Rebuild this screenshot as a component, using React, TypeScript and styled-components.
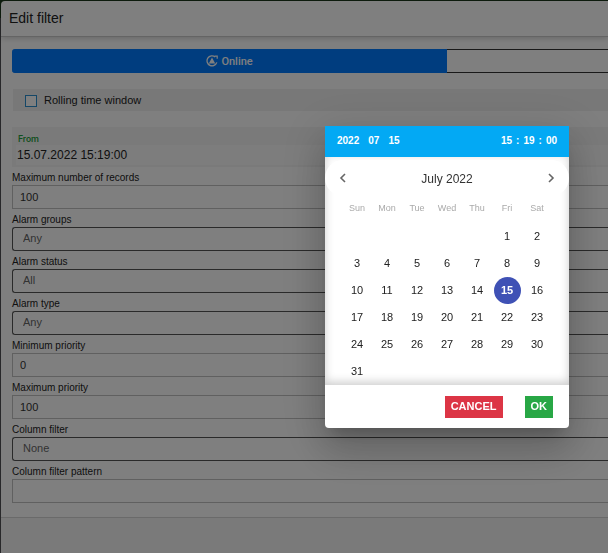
import { useState } from "react";
import styled, { createGlobalStyle, css } from "styled-components";

const GlobalStyle = createGlobalStyle`
  *, *::before, *::after { box-sizing: border-box; }
  html, body, #root { height: 100%; }
  body {
    margin: 0;
    background: #143014;
    font-family: "Liberation Sans", Arial, sans-serif;
    overflow: hidden;
  }
  button, input, select { font-family: inherit; }
`;

const Page = styled.div`
  min-height: 100%;
  padding: 1px 0 0 1px;
  display: flex;
  background: linear-gradient(#1c3a1c 0 18px, #505054 18px);
`;

const Dialog = styled.section`
  flex: 1;
  display: flex;
  flex-direction: column;
  background: #fff;
  border-radius: 4px 0 0 4px;
`;

const DialogHeader = styled.header`
  height: 36px;
  padding: 0 8px 2px;
  display: flex;
  align-items: center;
  border-bottom: 1px solid #c8c8c8;
  box-shadow: 0 1px 6px rgba(0, 0, 0, 0.2);
`;

const DialogTitle = styled.h1`
  margin: 0;
  font-size: 14px;
  font-weight: 400;
  line-height: 20px;
  color: #222;
`;

const DialogBody = styled.form`
  flex: 1;
  padding: 12px 0 0 11px;
`;

const Segments = styled.div`
  display: flex;
  height: 24px;
`;

const Segment = styled.button<{ $active?: boolean }>`
  flex: ${(p) => (p.$active ? "0 0 73%" : "1")};
  display: flex;
  align-items: center;
  justify-content: center;
  gap: 3px;
  padding: 0;
  font-size: 11px;
  border: 1px solid #333;
  border-width: 1px 0;
  background: #fff;
  color: #333;
  ${(p) =>
    p.$active &&
    css`
      border-color: #007bff;
      border-radius: 3px 0 0 3px;
      background: #007bff;
      color: #fff;
      font-family: Roboto, sans-serif;
      font-weight: 500;
    `}
`;

const RollingRow = styled.label`
  display: flex;
  align-items: center;
  gap: 7px;
  height: 22px;
  margin: 16px 0 0 1px;
  padding-left: 12px;
  background: #f1f1f1;
  font-size: 11px;
  color: #222;
`;

const CheckBox = styled.input`
  appearance: none;
  width: 12px;
  height: 12px;
  margin: 1px 0 0;
  border: 1px solid #2a8fce;
  background: #fff;
  &:checked {
    background: #2a8fce;
  }
`;

const DateField = styled.label`
  display: flex;
  flex-direction: column;
  height: 40px;
  margin-top: 16px;
  padding: 6px 0 0 4px;
  background: #f4f4f4;
`;

const DateCaption = styled.span`
  padding-left: 2px;
  font-family: Roboto, sans-serif;
  font-size: 9px;
  font-weight: 500;
  line-height: 12px;
  color: #1fa03c;
`;

const DateInput = styled.input`
  width: 100%;
  height: 20px;
  padding: 0 0 0 1px;
  border: 0;
  background: #fafafa;
  font-size: 12px;
  color: #222;
`;

const Field = styled.div`
  display: flex;
  flex-direction: column;
`;

const FieldLabel = styled.label`
  height: 18px;
  padding-top: 3px;
  font-size: 10px;
  line-height: 15px;
  color: #222;
`;

const box = css`
  width: 100%;
  height: 24px;
  background: #fff;
  font-size: 11px;
  color: #333;
`;

const TextInput = styled.input`
  ${box}
  padding: 0 7px;
  border: 1px solid #c0c0c0;
  border-right: 0;
`;

const Select = styled.select`
  ${box}
  appearance: none;
  padding: 0 10px 2px;
  border: 1px solid #555;
  border-right: 0;
  border-radius: 3px 0 0 3px;
  color: #666;
`;

const DialogFooter = styled.footer`
  height: 36px;
  border-top: 1px solid #d5d5d5;
  background: #f5f5f5;
`;

const Overlay = styled.div`
  position: fixed;
  inset: 0;
  display: flex;
  align-items: flex-start;
  justify-content: flex-end;
  padding: 126px 39px 0 0;
  background: rgba(0, 0, 0, 0.5);
`;

const Picker = styled.div`
  width: 244px;
  border-radius: 0 0 4px 4px;
  background: #fff;
  box-shadow:
    0 11px 15px -7px rgba(0, 0, 0, 0.2),
    0 24px 38px 3px rgba(0, 0, 0, 0.14),
    0 9px 46px 8px rgba(0, 0, 0, 0.12);
`;

const PickerHeader = styled.header`
  display: flex;
  justify-content: space-between;
  align-items: center;
  height: 31px;
  padding: 0 12px 2px;
  background: #03a9f4;
  color: #fff;
  font-size: 10px;
  font-weight: 700;
  line-height: 14px;
`;

const Parts = styled.div<{ $gap: number }>`
  display: flex;
  gap: ${(p) => p.$gap}px;
`;

const PickerBody = styled.div`
  padding-top: 3px;
  box-shadow: inset 0 -3px 10px rgba(0, 0, 0, 0.2);
`;

const MonthNav = styled.nav`
  display: flex;
  justify-content: space-between;
  align-items: center;
  height: 36px;
  border-radius: 18px;
  background: #fff;
`;

const MonthLabel = styled.strong`
  padding-top: 1px;
  font-size: 12px;
  font-weight: 400;
  line-height: 16px;
  color: #333;
`;

const NavButton = styled.button`
  display: flex;
  align-items: center;
  justify-content: center;
  width: 36px;
  height: 36px;
  padding: 0;
  border: 0;
  background: none;
  color: #666;
`;

const Calendar = styled.table`
  width: 210px;
  margin: 0 17px;
  border-collapse: collapse;
  table-layout: fixed;
  text-align: center;
`;

const Weekday = styled.th`
  height: 27px;
  padding: 0 0 3px;
  font-size: 9px;
  font-weight: 400;
  line-height: 12px;
  color: #aaa;
`;

const DayCell = styled.td`
  height: 27px;
  padding: 0;
`;

const Day = styled.button<{ $selected: boolean }>`
  display: block;
  width: 27px;
  height: 27px;
  margin: 0 auto;
  padding: 0 0 2px;
  border: 0;
  border-radius: 50%;
  background: ${(p) => (p.$selected ? "#3f51b5" : "transparent")};
  color: ${(p) => (p.$selected ? "#fff" : "#222")};
  font-size: 11px;
  font-weight: ${(p) => (p.$selected ? 700 : 400)};
`;

const Actions = styled.footer`
  display: flex;
  justify-content: flex-end;
  gap: 22px;
  height: 43px;
  padding: 11px 16px 0 0;
`;

const Action = styled.button<{ $color: string }>`
  height: 22px;
  padding: 0 6px 2px;
  border: 0;
  background: ${(p) => p.$color};
  color: #fff;
  font-size: 11px;
  font-weight: 700;
`;

const OnlineIcon = () => (
  <svg width="12" height="12" viewBox="0 0 12 12" fill="none" stroke="currentColor" aria-hidden="true">
    <path d="M9.2 2A5 5 0 1 0 10.8 7.4" strokeWidth="1.3" />
    <path d="M8.6 1.2h2.6v2.6" strokeWidth="1.2" />
    <path d="M6 2.6 9.2 8.6H2.8Z" fill="currentColor" stroke="none" />
  </svg>
);

const Chevron = ({ right }: { right?: boolean }) => (
  <svg width="8" height="10" viewBox="0 0 8 10" fill="none" stroke="currentColor" strokeWidth="1.6" aria-hidden="true">
    <path d={right ? "M2 1 6 5 2 9" : "M6 1 2 5 6 9"} />
  </svg>
);

type FieldSpec = { id: string; label: string; value: string; kind: "text" | "select" };

const fields: FieldSpec[] = [
  { id: "records", label: "Maximum number of records", value: "100", kind: "text" },
  { id: "groups", label: "Alarm groups", value: "Any", kind: "select" },
  { id: "status", label: "Alarm status", value: "All", kind: "select" },
  { id: "type", label: "Alarm type", value: "Any", kind: "select" },
  { id: "min", label: "Minimum priority", value: "0", kind: "text" },
  { id: "max", label: "Maximum priority", value: "100", kind: "text" },
  { id: "column", label: "Column filter", value: "None", kind: "select" },
  { id: "pattern", label: "Column filter pattern", value: "", kind: "text" },
];

const weekdays = ["Sun", "Mon", "Tue", "Wed", "Thu", "Fri", "Sat"];
const firstWeekday = 5;
const weeks = Array.from({ length: 6 }, (_, w) =>
  Array.from({ length: 7 }, (_, d) => {
    const day = w * 7 + d - firstWeekday + 1;
    return day >= 1 && day <= 31 ? day : null;
  }),
);

export default function App() {
  const [selected, setSelected] = useState(15);
  const day = String(selected).padStart(2, "0");

  return (
    <>
      <GlobalStyle />
      <Page>
        <Dialog>
          <DialogHeader>
            <DialogTitle>Edit filter</DialogTitle>
          </DialogHeader>
          <DialogBody>
            <Segments>
              <Segment type="button" $active>
                <OnlineIcon />
                Online
              </Segment>
              <Segment type="button" />
            </Segments>
            <RollingRow>
              <CheckBox type="checkbox" />
              Rolling time window
            </RollingRow>
            <DateField>
              <DateCaption>From</DateCaption>
              <DateInput readOnly value={`${day}.07.2022 15:19:00`} />
            </DateField>
            {fields.map((f) => (
              <Field key={f.id}>
                <FieldLabel htmlFor={f.id}>{f.label}</FieldLabel>
                {f.kind === "text" ? (
                  <TextInput id={f.id} defaultValue={f.value} />
                ) : (
                  <Select id={f.id}>
                    <option>{f.value}</option>
                  </Select>
                )}
              </Field>
            ))}
          </DialogBody>
          <DialogFooter />
        </Dialog>
      </Page>
      <Overlay>
        <Picker role="dialog" aria-label="Choose date and time">
          <PickerHeader>
            <Parts $gap={9}>
              <span>2022</span>
              <span>07</span>
              <span>{day}</span>
            </Parts>
            <Parts $gap={4}>
              <span>15</span>
              <span>:</span>
              <span>19</span>
              <span>:</span>
              <span>00</span>
            </Parts>
          </PickerHeader>
          <PickerBody>
            <MonthNav>
              <NavButton type="button" aria-label="Previous month">
                <Chevron />
              </NavButton>
              <MonthLabel>July 2022</MonthLabel>
              <NavButton type="button" aria-label="Next month">
                <Chevron right />
              </NavButton>
            </MonthNav>
            <Calendar>
              <thead>
                <tr>
                  {weekdays.map((w) => (
                    <Weekday key={w}>{w}</Weekday>
                  ))}
                </tr>
              </thead>
              <tbody>
                {weeks.map((week, i) => (
                  <tr key={i}>
                    {week.map((d, j) => (
                      <DayCell key={j}>
                        {d && (
                          <Day type="button" $selected={d === selected} onClick={() => setSelected(d)}>
                            {d}
                          </Day>
                        )}
                      </DayCell>
                    ))}
                  </tr>
                ))}
              </tbody>
            </Calendar>
          </PickerBody>
          <Actions>
            <Action type="button" $color="#dc3545">
              CANCEL
            </Action>
            <Action type="button" $color="#28a745">
              OK
            </Action>
          </Actions>
        </Picker>
      </Overlay>
    </>
  );
}
